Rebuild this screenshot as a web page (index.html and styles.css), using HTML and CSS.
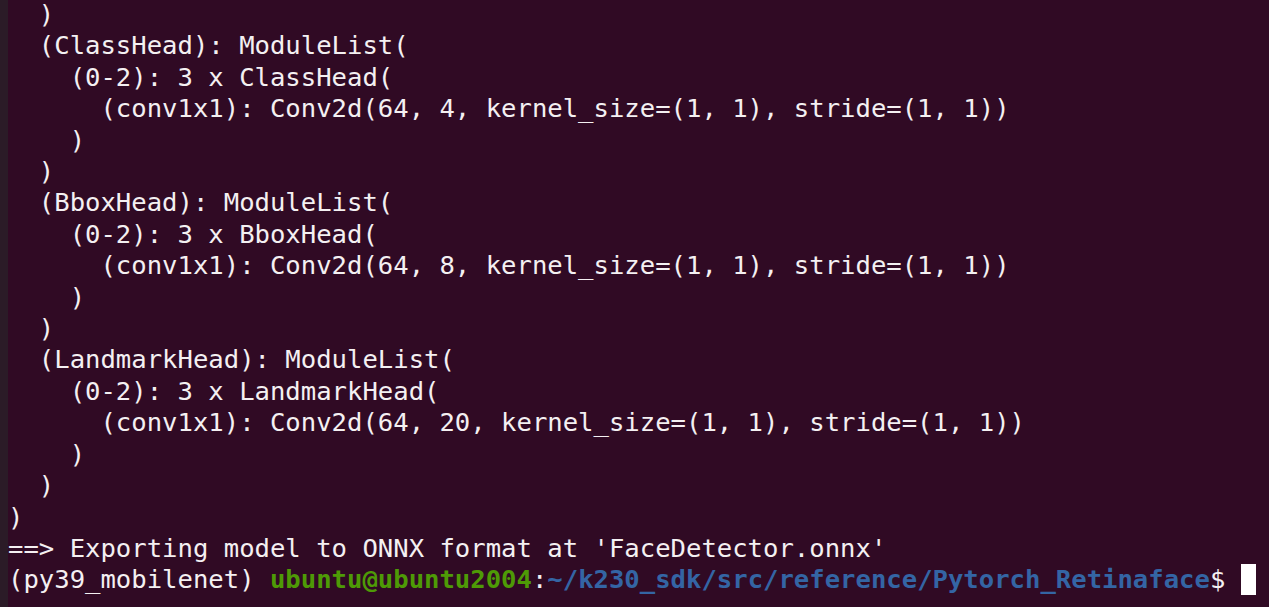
FILE: index.html
```html
<!DOCTYPE html>
<html>
<head>
<meta charset="utf-8">
<link rel="stylesheet" href="styles.css">
</head>
<body>
<div class="terminal">
<div class="gutter"></div>
<pre class="output">  )
  (ClassHead): ModuleList(
    (0-2): 3 x ClassHead(
      (conv1x1): Conv2d(64, 4, kernel_size=(1, 1), stride=(1, 1))
    )
  )
  (BboxHead): ModuleList(
    (0-2): 3 x BboxHead(
      (conv1x1): Conv2d(64, 8, kernel_size=(1, 1), stride=(1, 1))
    )
  )
  (LandmarkHead): ModuleList(
    (0-2): 3 x LandmarkHead(
      (conv1x1): Conv2d(64, 20, kernel_size=(1, 1), stride=(1, 1))
    )
  )
)
==&gt; Exporting model to ONNX format at 'FaceDetector.onnx'
(py39_mobilenet) <span class="user">ubuntu@ubuntu2004</span>:<span class="path">~/k230_sdk/src/reference/Pytorch_Retinaface</span>$ <span class="cursor"> </span></pre>
</div>
</body>
</html>
```
FILE: styles.css
```css
html, body {
  margin: 0;
  padding: 0;
  height: 100%;
  background: #300a24;
  overflow: hidden;
}
.terminal {
  display: flex;
  height: 100%;
}
.gutter {
  width: 8px;
  flex: none;
  background: #2b1b27;
}
.output {
  margin: -1px 0 0 0;
  padding: 0;
  font-family: "DejaVu Sans Mono", monospace;
  font-size: 25.6px;
  line-height: 31.4px;
  color: #f4f0f2;
  white-space: pre;
}
.user {
  color: #4e9a06;
  font-weight: bold;
}
.path {
  color: #3465a4;
  font-weight: bold;
}
.cursor {
  display: inline-block;
  width: 15px;
  height: 31px;
  background: #ffffff;
  vertical-align: top;
}
```
